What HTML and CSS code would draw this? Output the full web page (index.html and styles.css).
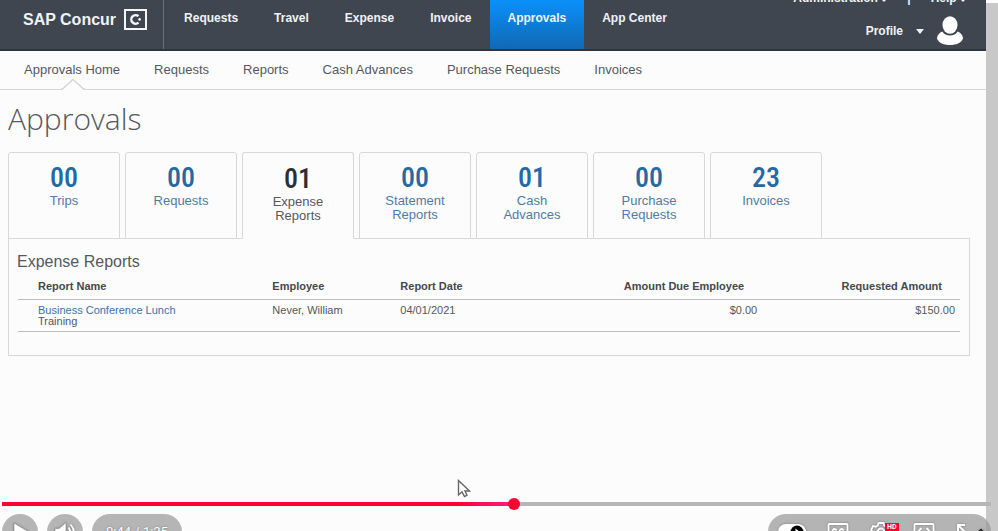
FILE: index.html
```html
<!DOCTYPE html>
<html lang="en">
<head>
  <meta charset="UTF-8">
  <title>Approvals - SAP Concur</title>
  <link rel="stylesheet" href="styles.css">
</head>
<body>

  <div class="screen">
    <div class="page">

      <!-- Top bar -->
      <header class="topbar">
        <a class="brand" href="#">
          <span>SAP Concur</span>
          <svg width="23" height="21" viewBox="0 0 23 21" fill="none" stroke="#f4f6f9">
            <rect x="1" y="1" width="21" height="19" stroke-width="2"/>
            <path d="M14.5 7.2A4.3 4.3 0 1 0 14.5 13.6" stroke-width="2.4"/>
            <circle cx="15.6" cy="10.4" r="1.3" fill="#f4f6f9" stroke="none"/>
          </svg>
        </a>
        <nav class="main-nav">
          <a href="#">Requests</a>
          <a href="#">Travel</a>
          <a href="#">Expense</a>
          <a href="#">Invoice</a>
          <a href="#" class="active">Approvals</a>
          <a href="#">App Center</a>
        </nav>
        <div class="account">
          <div class="utility">
            <a href="#">Administration <i class="caret small"></i></a>
            <span>|</span>
            <a href="#">Help <i class="caret small"></i></a>
          </div>
          <a class="profile" href="#">
            Profile <i class="caret"></i>
            <svg width="26" height="30" viewBox="0 0 26 30" fill="#fff">
              <ellipse cx="13" cy="9" rx="7.5" ry="8.7"/>
              <path d="M5.2 15.5C2 17 0 19.500 0 22.500C1.500 27 7 29 13 29S24.500 27 26 22.500C26 19.500 24 17 20.800 15.500C19 18 16.500 19.500 13 19.500S7 18 5.200 15.500Z"/>
            </svg>
          </a>
        </div>
      </header>

      <nav class="sub-nav">
        <a href="#" class="current">Approvals Home
          <svg class="notch" width="24" height="12" viewBox="0 0 24 12">
            <path d="M0 12L12 1L24 12Z" fill="#fcfcfc"/>
            <path d="M0 11H1.500L12 1.500L22.500 11H24" fill="none" stroke="#d5d5d7" stroke-width="1.300"/>
          </svg>
        </a>
        <a href="#">Requests</a>
        <a href="#">Reports</a>
        <a href="#">Cash Advances</a>
        <a href="#">Purchase Requests</a>
        <a href="#">Invoices</a>
      </nav>

      <main>
        <h1>Approvals</h1>

        <div class="tabs">
          <button class="tab"><b>00</b>Trips</button>
          <button class="tab"><b>00</b>Requests</button>
          <button class="tab selected"><b>01</b>Expense<br>Reports</button>
          <button class="tab"><b>00</b>Statement<br>Reports</button>
          <button class="tab"><b>01</b>Cash<br>Advances</button>
          <button class="tab"><b>00</b>Purchase<br>Requests</button>
          <button class="tab"><b>23</b>Invoices</button>
        </div>

        <section class="panel">
          <h2>Expense Reports</h2>
          <table>
            <thead>
              <tr>
                <th class="name">Report Name</th>
                <th class="employee">Employee</th>
                <th class="date">Report Date</th>
                <th class="amount">Amount Due Employee</th>
                <th class="requested amount">Requested Amount</th>
              </tr>
            </thead>
            <tbody>
              <tr>
                <td class="name"><a href="#">Business Conference Lunch</a><br>Training</td>
                <td>Never, William</td>
                <td>04/01/2021</td>
                <td class="amount">$0.00</td>
                <td class="amount">$150.00</td>
              </tr>
            </tbody>
          </table>
        </section>
      </main>
    </div>
    <div class="scrollbar"></div>

    <svg class="cursor" width="14" height="20" viewBox="0 0 14 20">
      <path d="M1.500 1.500V16L5 12.800L7.500 17.500L10 16.200L8 12H12.500Z" fill="#fff" stroke="#666" stroke-width="1.400"/>
    </svg>

    <!-- Video player controls -->
    <div class="player">
      <input class="seek" type="range" min="0" max="85" value="44" aria-label="Seek">
      <div class="controls">
        <button class="round" aria-label="Play">
          <svg width="36" height="36" viewBox="0 0 36 36"><path d="M12 9L27 18L12 27Z" fill="#fff" stroke="#888" stroke-width=".6"/></svg>
        </button>
        <button class="round" aria-label="Mute">
          <svg width="36" height="36" viewBox="0 0 36 36" fill="#fff">
            <path d="M8 14.500H12L19 8.500V27.500L12 21.500H8Z" stroke="#888" stroke-width=".6"/>
            <path d="M21.500 13.500Q25 18 21.500 22.500M23.500 10.500Q30.500 18 23.500 25.500" fill="none" stroke="#fff" stroke-width="1.800"/>
          </svg>
        </button>
        <div class="time">0:44 / 1:25</div>
        <div class="options">
          <button class="autoplay" aria-label="Autoplay">
            <svg width="30" height="36" viewBox="0 0 30 36">
              <rect x="1" y="10" width="28" height="16" rx="8" fill="#fff"/>
              <circle cx="20" cy="18" r="6.500" fill="#000"/>
              <path d="M18.500 14.500L23 18L18.500 21.500Z" fill="#fff"/>
            </svg>
          </button>
          <button aria-label="Subtitles">
            <svg width="22" height="36" viewBox="0 0 22 36" fill="none" stroke="#fff" stroke-width="1.800">
              <rect x="1.500" y="10" width="19" height="15" rx="1"/>
              <path d="M9.500 16.500Q9 15 7.500 15T5.500 17V20T7.500 21.500T9.500 20M16.500 16.500Q16 15 14.500 15T12.500 17V20T14.500 21.500T16.500 20"/>
            </svg>
          </button>
          <button class="settings" aria-label="Settings">
            <svg width="24" height="36" viewBox="0 0 24 36" fill="none" stroke="#fff" stroke-width="1.800">
              <path d="M9.500 9H14.500L15.200 11.500L17.300 12.700L20 12L22 16L20 18L22 20L20 24L17.300 23.300L15.200 24.500L14.500 27H9.500L8.800 24.500L6.700 23.300L4 24L2 20L4 18L2 16L4 12L6.700 12.700L8.800 11.500Z"/>
              <circle cx="12" cy="18" r="3.500"/>
            </svg>
            <span class="hd">HD</span>
          </button>
          <button aria-label="Embed">
            <svg width="22" height="36" viewBox="0 0 22 36" fill="none" stroke="#fff" stroke-width="1.800">
              <rect x="1.500" y="10" width="19" height="15" rx="1"/>
              <path d="M8.500 14L5 17.500L8.500 21M13.500 14L17 17.500L13.500 21"/>
            </svg>
          </button>
          <button aria-label="Full screen">
            <svg width="30" height="36" viewBox="0 0 30 36" fill="none" stroke="#fff" stroke-width="2">
              <path d="M3 18V11H10M3.500 11.500L10 18"/>
              <path d="M23 18.500L26 15.500L29 18.500" stroke="#222" stroke-width="1.500"/>
            </svg>
          </button>
        </div>
      </div>
    </div>
  </div>

</body>
</html>
```
FILE: styles.css
```css
body {
  margin: 0;
  font-family: "Liberation Sans", Arial, sans-serif;
  font-size: 13px;
  color: #55585c;
  background: #fcfcfc;
}

a {
  color: inherit;
  text-decoration: none;
}

button {
  font: inherit;
  border: 0;
  padding: 0;
  background: none;
  cursor: pointer;
}

.screen {
  position: relative;
  display: flex;
  height: 100vh;
  overflow: hidden;
}

.page {
  flex: 1;
}

.scrollbar {
  width: 12px;
  box-sizing: border-box;
  border-top: 3px solid #fcfcfc;
  background: #c8c8c8;
}

/* top bar */
.topbar {
  display: flex;
  height: 49px;
  background: #404650;
  border-bottom: 2px solid #2f353e;
  color: #f0f2f5;
  font-size: 12px;
  font-weight: bold;
}

.brand {
  display: flex;
  align-items: center;
  gap: 8px;
  padding: 0 16px 10px 23px;
  border-right: 1px solid #6b717b;
  font-size: 16px;
}

.main-nav {
  display: flex;
  flex: 1;
  padding-left: 2px;
}

.main-nav a {
  padding: 10px 18px 0;
  line-height: 16px;
}

.main-nav .active {
  background: linear-gradient(#0a90fa, #1169b4);
}

.account {
  display: flex;
  flex-direction: column;
  align-items: flex-end;
  padding-right: 23px;
}

.utility {
  display: flex;
  gap: 20px;
  margin: -9px -3px 0 0;
  line-height: 14px;
}

.profile {
  display: flex;
  align-items: center;
  gap: 13px;
  margin-top: 11px;
}

.caret {
  display: inline-block;
  border: 4px solid transparent;
  border-top: 5px solid #f0f2f5;
  border-bottom: 0;
}

.caret.small {
  border-width: 3px 3px 0;
  vertical-align: 0;
}

/* second level */
.sub-nav {
  display: flex;
  gap: 34px;
  height: 38px;
  padding-left: 24px;
  border-bottom: 1px solid #d5d5d7;
  line-height: 37px;
}

.current {
  position: relative;
}

.notch {
  position: absolute;
  left: 37px;
  bottom: -1px;
}

main {
  padding: 0 16px 0 8px;
}

h1 {
  margin: 8px 0 13px;
  font: 300 30px/41px "Open Sans", sans-serif;
}

.tabs {
  display: flex;
  gap: 5px;
}

.tab {
  display: flex;
  flex-direction: column;
  align-items: center;
  width: 112px;
  height: 87px;
  box-sizing: border-box;
  padding-top: 9px;
  border: 1px solid #d8d8da;
  border-radius: 3px 3px 0 0;
  color: #4f7ba6;
  line-height: 14px;
}

.tab b {
  margin-bottom: 1px;
  font: 500 28px/31px "Roboto Condensed", "Roboto", sans-serif;
  color: #2468a4;
}

.tab.selected {
  padding-top: 10px;
  border-bottom-color: #fcfcfc;
  color: #55585c;
  z-index: 1;
}

.tab.selected b {
  color: #2b3038;
}

.panel {
  margin-top: -1px;
  padding: 13px 9px 23px;
  border: 1px solid #d8d8da;
}

h2 {
  margin: 0 0 6px -1px;
  font-size: 16px;
  line-height: 20px;
  font-weight: normal;
}

table {
  width: 100%;
  table-layout: fixed;
  border-collapse: collapse;
  font-size: 11px;
  line-height: 11px;
}

th, td {
  padding: 5px 0 4px;
  border-bottom: 1px solid #bdbdbf;
  text-align: left;
  vertical-align: top;
}

th {
  box-sizing: border-box;
  padding: 3px 0 7px;
  color: #45484c;
}

td a {
  color: #3f72a3;
}

.name { width: 27%; padding-left: 20px; }
.employee { width: 128px; }
.date { width: 17%; }
.requested { width: 21%; }

.amount {
  text-align: right;
}

th.amount {
  padding-right: 18px;
}

td.amount {
  padding-right: 5px;
}

.cursor {
  position: absolute;
  left: 457px;
  top: 479px;
}

/* video player */
.player {
  position: absolute;
  left: 2px;
  right: 7px;
  bottom: -19px;
}

.seek {
  display: block;
  width: 100%;
  height: 12px;
  margin: 0 0 4px;
  appearance: none;
  background: linear-gradient(to right, #ff0033 0 46%, #ff1f86 52%, #b5b5b5 52%) center / 100% 4px no-repeat;
}

.seek::-webkit-slider-thumb {
  appearance: none;
  width: 12px;
  height: 12px;
  border-radius: 50%;
  background: #ff0033;
}

.controls {
  display: flex;
  height: 36px;
}

.round {
  width: 36px;
  height: 36px;
  margin-right: 9px;
  border-radius: 50%;
  background: #b5b5b5;
}

.time {
  width: 90px;
  border-radius: 18px;
  background: #b5b5b5;
  color: #fff;
  font: 13px/36px "Roboto", sans-serif;
  text-align: center;
  text-shadow: 0 0 2px #666;
}

.options {
  display: flex;
  gap: 20px;
  margin-left: auto;
  padding: 0 6px 0 9px;
  border-radius: 18px;
  background: rgba(150, 150, 150, 0.7);
}

.options svg, .round svg {
  display: block;
  filter: drop-shadow(0 0 1px #777);
}

.settings {
  position: relative;
}

.hd {
  position: absolute;
  left: 16px;
  top: 9px;
  padding: 0 2px;
  background: #ff0033;
  color: #fff;
  font: bold 7px/8px "Roboto", sans-serif;
}
```
